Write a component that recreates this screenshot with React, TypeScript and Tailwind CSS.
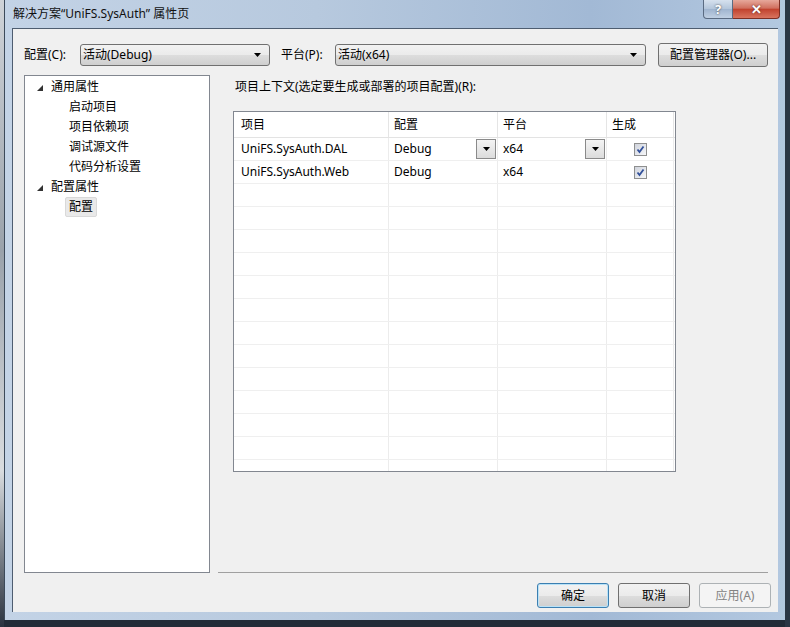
import React from "react";

const font = "font-['Noto_Sans','Noto_Sans_CJK_SC',sans-serif]";

const Arrow = () => (
  <svg width="7" height="4" viewBox="0 0 7 4">
    <polygon points="0,0 7,0 3.5,4" fill="#000" />
  </svg>
);

const TreeArrow = () => (
  <svg width="6" height="6" viewBox="0 0 6 6">
    <polygon points="6,0 6,6 0,6" fill="#333" />
  </svg>
);

const Check = () => (
  <div className="w-[13px] h-[13px] border border-[#8e8f8f] bg-[linear-gradient(135deg,#cfd3dc,#f6f7f9)] flex items-center justify-center">
    <svg width="9" height="9" viewBox="0 0 9 9">
      <path d="M1.5 4.5 L3.5 7 L7.5 1.5" stroke="#31509a" strokeWidth="1.8" fill="none" />
    </svg>
  </div>
);

const CellDrop = () => (
  <div className="w-[20px] h-[20px] border border-[#8a8a8a] bg-[linear-gradient(#f4f4f4,#dcdcdc)] flex items-center justify-center">
    <Arrow />
  </div>
);

interface Row {
  name: string;
  config: string;
  platform: string;
  dropdown?: boolean;
}

const rows: Row[] = [
  { name: "UniFS.SysAuth.DAL", config: "Debug", platform: "x64", dropdown: true },
  { name: "UniFS.SysAuth.Web", config: "Debug", platform: "x64" },
];

const treeItems = [
  { text: "通用属性", level: 0 },
  { text: "启动项目", level: 1 },
  { text: "项目依赖项", level: 1 },
  { text: "调试源文件", level: 1 },
  { text: "代码分析设置", level: 1 },
  { text: "配置属性", level: 0 },
  { text: "配置", level: 1, selected: true },
];

export default function App() {
  const empty = Array.from({ length: 13 });

  return (
    <div className={`w-[790px] h-[627px] overflow-hidden bg-[#222c38] flex text-[12px] text-black ${font}`}>
      {/* desktop strip on the left */}
      <div className="w-[4px] h-full bg-[linear-gradient(#cfd3d8,#9aa2ab_40%,#d9dcdf_75%,#2a3340)]" />

      {/* window */}
      <div className="w-[781px] h-[620px] flex flex-col border-l border-[#3c4a5a] bg-[linear-gradient(90deg,#c3d3e6_0%,#b7c9de_40%,#a2b9d5_75%,#b3c8e0_100%)]">
        {/* title bar */}
        <div className="h-[28px] flex justify-between pl-[8px] pr-[5px]">
          <div className="pt-[6px] leading-[16px] text-[#111]">解决方案“UniFS.SysAuth” 属性页</div>
          <div className="flex h-[19px]">
            <div className="w-[30px] h-full border border-[#5a6b82] border-t-0 rounded-bl-[4px] bg-[linear-gradient(#d6e1ee,#b3c5da_50%,#9fb4cf_51%,#c0d0e3)] flex items-center justify-center text-white font-bold text-[13px] leading-none [text-shadow:0_0_2px_#333]">
              ?
            </div>
            <div className="w-[47px] h-full border border-[#7d2f25] border-t-0 border-l-0 rounded-br-[4px] bg-[linear-gradient(#e6a89b,#d0705f_45%,#c1432f_52%,#d9745f)] flex items-center justify-center text-white font-bold text-[13px] leading-none [text-shadow:0_0_2px_#522]">
              ✕
            </div>
          </div>
        </div>

        {/* client area */}
        <div className="ml-[7px] w-[766px] h-[584px] bg-[#f0f0f0] border-t border-l border-[#4e5d70] flex flex-col pl-[11px] pt-[14px]">
          {/* top row */}
          <div className="h-[24px] flex items-center">
            <div className="w-[56px]">配置(C):</div>
            <div className="w-[190px] h-[22px] rounded-[3px] border border-[#707070] bg-[linear-gradient(#f2f2f2,#ebebeb_50%,#dddddd_51%,#cfcfcf)] flex items-center justify-between pl-[2px] pr-[8px]">
              <span>活动(Debug)</span>
              <Arrow />
            </div>
            <div className="ml-[11px] w-[54px]">平台(P):</div>
            <div className="w-[311px] h-[22px] rounded-[3px] border border-[#707070] bg-[linear-gradient(#f2f2f2,#ebebeb_50%,#dddddd_51%,#cfcfcf)] flex items-center justify-between pl-[2px] pr-[8px]">
              <span>活动(x64)</span>
              <Arrow />
            </div>
            <div className="ml-[12px] w-[110px] h-[24px] rounded-[3px] border border-[#707070] bg-[linear-gradient(#f2f2f2,#ebebeb_50%,#dddddd_51%,#cfcfcf)] flex items-center justify-center">
              配置管理器(O)...
            </div>
          </div>

          {/* body */}
          <div className="mt-[8px] flex">
            <div className="w-[186px] h-[498px] bg-white border border-[#828790] pt-[1px]">
              {treeItems.map((item) => (
                <div key={item.text} className="h-[20px] flex items-center">
                  {item.level === 0 ? (
                    <div className="flex items-center">
                      <div className="w-[26px] pl-[12px] pt-[1px] flex"><TreeArrow /></div>
                      <span>{item.text}</span>
                    </div>
                  ) : (
                    <div className={item.selected ? "ml-[40px] h-[20px] px-[3px] flex items-center bg-[#e9e9e9] border border-[#d9d9d9] rounded-[2px]" : "ml-[44px]"}>
                      {item.text}
                    </div>
                  )}
                </div>
              ))}
            </div>

            <div className="ml-[8px] w-[550px] h-[498px] border-b border-[#a0a0a0] pl-[15px] pt-[4px]">
              <div className="pl-[2px] leading-[16px]">项目上下文(选定要生成或部署的项目配置)(R):</div>
              <div className="mt-[16px] w-[443px] h-[361px] border border-[#828790] bg-white overflow-hidden">
                <div className="h-[26px] flex border-b border-[#e3e3e3]">
                  <div className="w-[155px] border-r border-[#e5e5e5] pl-[7px] flex items-center">项目</div>
                  <div className="w-[109px] border-r border-[#e5e5e5] pl-[5px] flex items-center">配置</div>
                  <div className="w-[109px] border-r border-[#e5e5e5] pl-[5px] flex items-center">平台</div>
                  <div className="w-[67px] border-r border-[#e5e5e5] pl-[5px] flex items-center">生成</div>
                </div>
                {rows.map((r) => (
                  <div key={r.name} className="h-[23px] flex border-b border-[#efefef]">
                    <div className="w-[155px] border-r border-[#ececec] pl-[7px] flex items-center">{r.name}</div>
                    <div className="w-[109px] border-r border-[#ececec] pl-[5px] pr-[1px] flex items-center justify-between">
                      <span>{r.config}</span>
                      {r.dropdown && <CellDrop />}
                    </div>
                    <div className="w-[109px] border-r border-[#ececec] pl-[5px] pr-[1px] flex items-center justify-between">
                      <span>{r.platform}</span>
                      {r.dropdown && <CellDrop />}
                    </div>
                    <div className="w-[67px] border-r border-[#ececec] flex items-center justify-center">
                      <Check />
                    </div>
                  </div>
                ))}
                {empty.map((_, i) => (
                  <div key={i} className="h-[23px] flex border-b border-[#efefef]">
                    <div className="w-[155px] border-r border-[#ececec]" />
                    <div className="w-[109px] border-r border-[#ececec]" />
                    <div className="w-[109px] border-r border-[#ececec]" />
                    <div className="w-[67px] border-r border-[#ececec]" />
                  </div>
                ))}
              </div>
            </div>
          </div>

          {/* buttons */}
          <div className="mt-[10px] flex justify-end gap-[9px] pr-[7px]">
            <div className="w-[72px] h-[25px] rounded-[3px] border border-[#3c7fb1] shadow-[inset_0_0_0_1px_#b9e2f7] bg-[linear-gradient(#f2f2f2,#ebebeb_50%,#dddddd_51%,#cfcfcf)] flex items-center justify-center">
              确定
            </div>
            <div className="w-[72px] h-[25px] rounded-[3px] border border-[#707070] bg-[linear-gradient(#f2f2f2,#ebebeb_50%,#dddddd_51%,#cfcfcf)] flex items-center justify-center">
              取消
            </div>
            <div className="w-[72px] h-[25px] rounded-[3px] border border-[#adb2b5] bg-[#f4f4f4] text-[#838383] flex items-center justify-center">
              应用(A)
            </div>
          </div>
        </div>
      </div>

      {/* desktop strip on the right */}
      <div className="w-[5px] h-full bg-[#2b3645]" />
    </div>
  );
}
